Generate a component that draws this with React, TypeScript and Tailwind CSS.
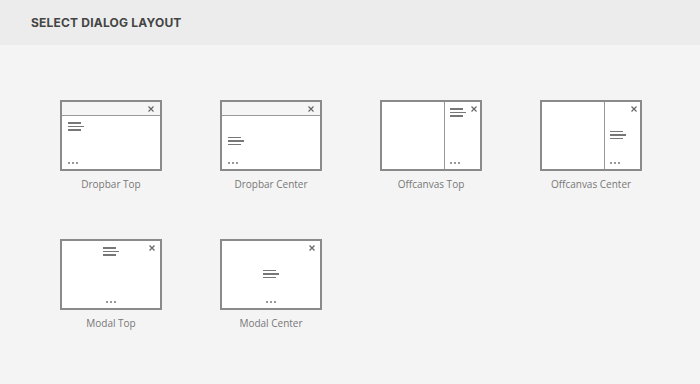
import React from 'react';

type Layout = 'dropbar-top' | 'dropbar-center' | 'offcanvas-top' | 'offcanvas-center' | 'modal-top' | 'modal-center';

const layouts: { id: Layout; label: string }[] = [
  { id: 'dropbar-top', label: 'Dropbar Top' },
  { id: 'dropbar-center', label: 'Dropbar Center' },
  { id: 'offcanvas-top', label: 'Offcanvas Top' },
  { id: 'offcanvas-center', label: 'Offcanvas Center' },
  { id: 'modal-top', label: 'Modal Top' },
  { id: 'modal-center', label: 'Modal Center' },
];

function Lines() {
  return (
    <div className="flex flex-col gap-[2px]">
      <span className="block h-[1.5px] w-[13px] bg-[#777]" />
      <span className="block h-[1.5px] w-[16px] bg-[#777]" />
      <span className="block h-[1.5px] w-[13px] bg-[#777]" />
    </div>
  );
}

function Dots() {
  return (
    <div className="flex gap-[2px]">
      <span className="block h-[2px] w-[2px] rounded-full bg-[#777]" />
      <span className="block h-[2px] w-[2px] rounded-full bg-[#777]" />
      <span className="block h-[2px] w-[2px] rounded-full bg-[#777]" />
    </div>
  );
}

function Close() {
  return (
    <svg width="6" height="6" viewBox="0 0 6 6" className="block">
      <path d="M0.5 0.5L5.5 5.5M5.5 0.5L0.5 5.5" stroke="#666" strokeWidth="1.2" />
    </svg>
  );
}

function Preview({ id }: { id: Layout }) {
  if (id === 'dropbar-top' || id === 'dropbar-center') {
    return (
      <div className="flex h-full flex-col">
        <div className="flex h-[14px] items-center justify-end border-b border-[#999] bg-[#f5f5f5] pr-[6px]">
          <Close />
        </div>
        <div className={`flex flex-1 flex-col px-[6px] pb-[5px] ${id === 'dropbar-top' ? 'pt-[6px]' : 'justify-center pt-[4px]'}`}>
          {id === 'dropbar-top' ? (
            <>
              <Lines />
              <div className="mt-auto"><Dots /></div>
            </>
          ) : (
            <>
              <div className="mt-auto"><Lines /></div>
              <div className="mt-auto"><Dots /></div>
            </>
          )}
        </div>
      </div>
    );
  }

  if (id === 'offcanvas-top' || id === 'offcanvas-center') {
    return (
      <div className="flex h-full">
        <div className="flex-1" />
        <div className="relative flex w-[36px] flex-col border-l border-[#999] px-[5px] pb-[5px] pt-[6px]">
          <div className="absolute right-[3px] top-[4px]"><Close /></div>
          {id === 'offcanvas-top' ? (
            <>
              <Lines />
              <div className="mt-auto"><Dots /></div>
            </>
          ) : (
            <>
              <div className="mt-auto"><Lines /></div>
              <div className="mt-auto"><Dots /></div>
            </>
          )}
        </div>
      </div>
    );
  }

  return (
    <div className="relative flex h-full flex-col items-center px-[6px] pb-[5px] pt-[6px]">
      <div className="absolute right-[5px] top-[4px]"><Close /></div>
      {id === 'modal-top' ? (
        <>
          <Lines />
          <div className="mt-auto"><Dots /></div>
        </>
      ) : (
        <>
          <div className="mt-auto"><Lines /></div>
          <div className="mt-auto"><Dots /></div>
        </>
      )}
    </div>
  );
}

export default function App() {
  return (
    <div className="h-[384px] w-[700px] bg-[#f4f4f4]" style={{ fontFamily: '"Open Sans", "Liberation Sans", sans-serif' }}>
      <div className="flex h-[45px] items-center bg-[#ececec] pl-[31px]">
        <h1 className="text-[12px] font-bold tracking-[0.2px] text-[#444]" style={{ fontFamily: 'Inter, "Open Sans", sans-serif' }}>
          SELECT DIALOG LAYOUT
        </h1>
      </div>
      <div className="grid grid-cols-[repeat(4,160px)] gap-y-[48px] pl-[31px] pt-[55px]">
        {layouts.map((l) => (
          <div key={l.id} className="flex flex-col items-center">
            <div className="h-[71px] w-[102px] border-2 border-[#8a8a8a] bg-white">
              <Preview id={l.id} />
            </div>
            <span className="mt-[6px] text-[10px] leading-[14px] text-[#777]">{l.label}</span>
          </div>
        ))}
      </div>
    </div>
  );
}
